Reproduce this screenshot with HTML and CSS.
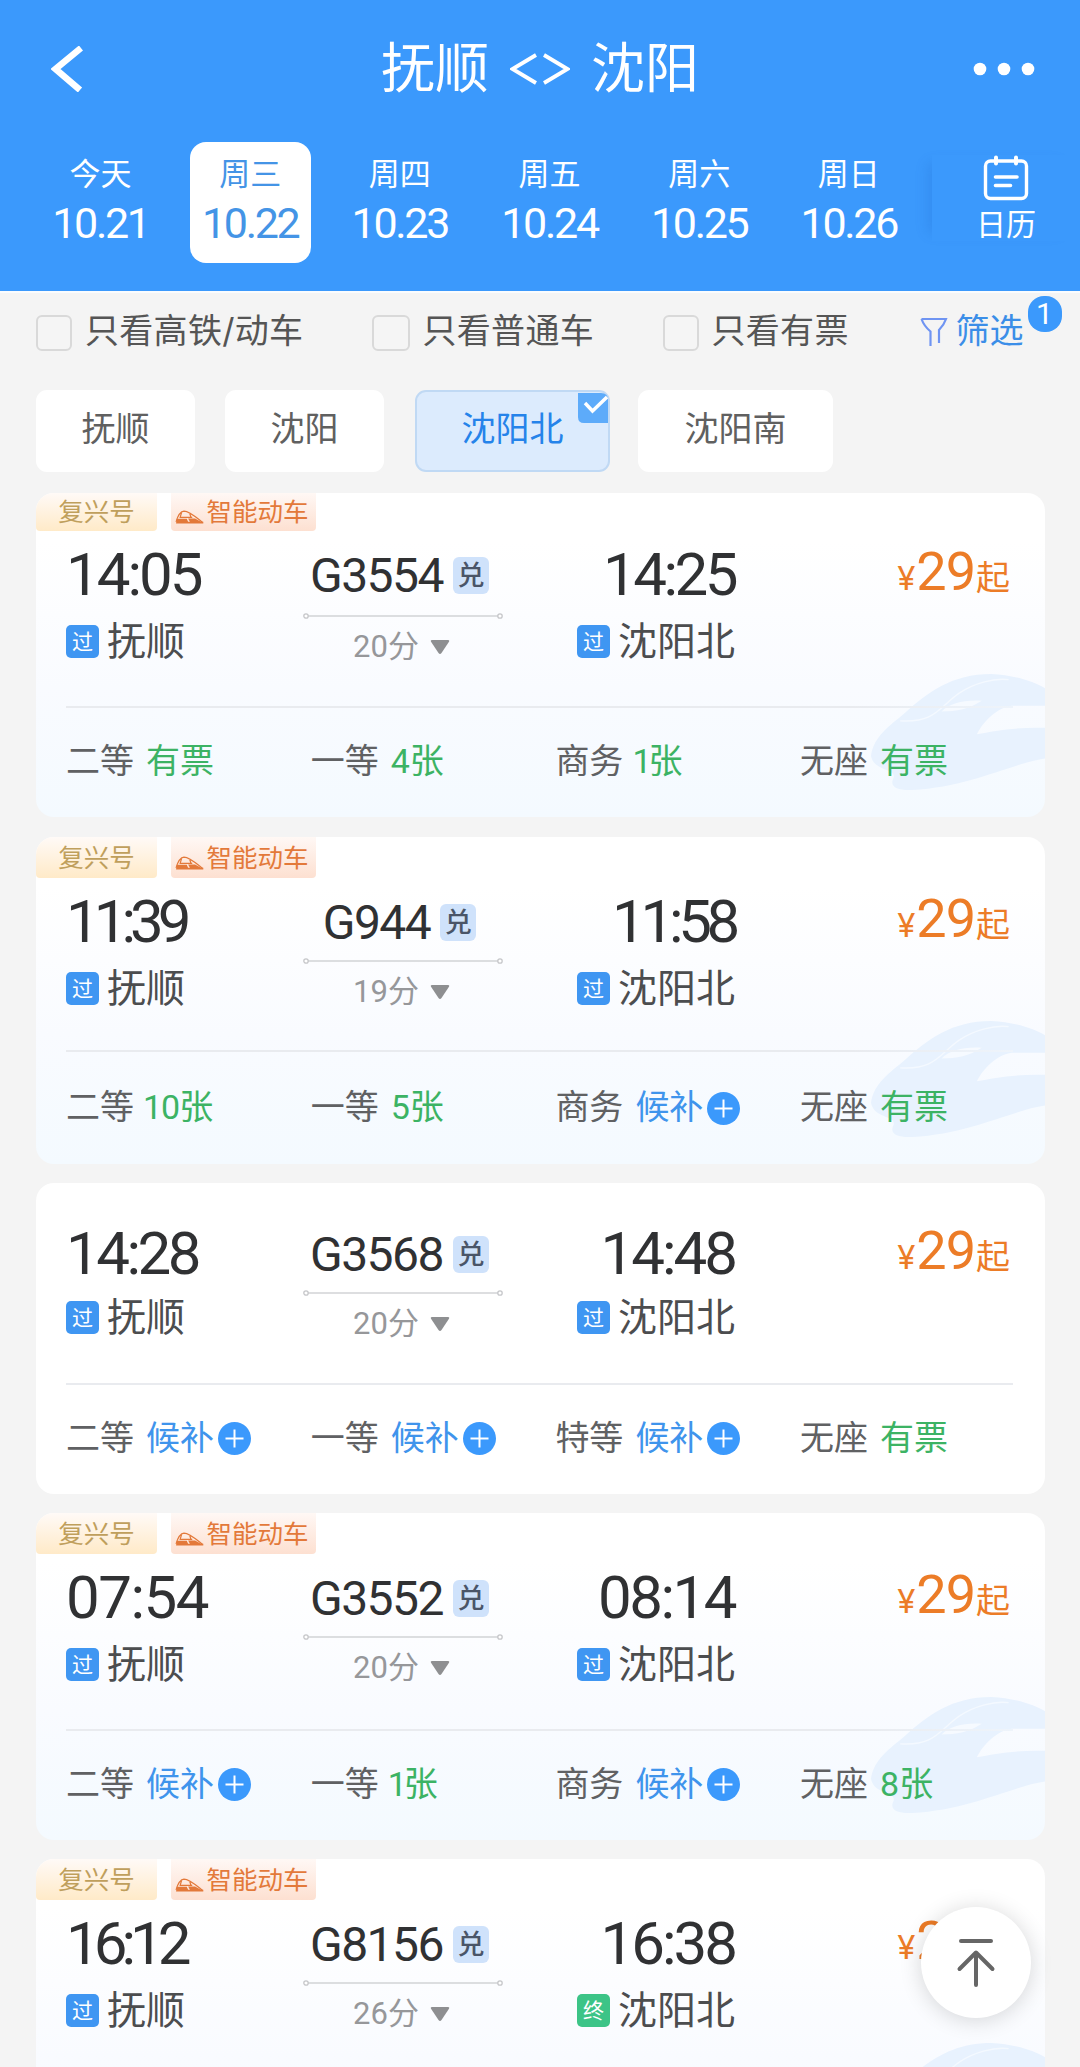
FILE: index.html
```html
<!DOCTYPE html>
<html lang="zh-CN">
<head>
<meta charset="utf-8">
<title>抚顺 - 沈阳</title>
<link rel="stylesheet" href="styles.css">
</head>
<body>
<svg class="defs" width="0" height="0">
  <symbol id="train" viewBox="0 0 84 40"><path d="M3 34 C8 17 14 4 26 3 C42 3 60 20 80 36 M19 7 L15 21 H50 M42 8 L46 20" fill="none" stroke="currentColor" stroke-width="3.500"/><path d="M5 25 H34 L38 34 H82 V39 H3 Z M38 24 H58 L78 35 H44 Z" fill="currentColor"/></symbol>
  <symbol id="plus" viewBox="0 0 33 33"><circle cx="16.500" cy="16.500" r="16.500" fill="#3b99fc"/><path d="M7.500 16.500 H25.500 M16.500 7.500 V25.500" stroke="#fff" stroke-width="2"/></symbol>
  <symbol id="line" viewBox="0 0 200 8"><path d="M5 4 H195" stroke="#d2d3d6" stroke-width="1.500"/><g fill="#fff" stroke="#c6c7ca" stroke-width="1.300"><circle cx="3" cy="4" r="2.200"/><circle cx="197" cy="4" r="2.200"/></g></symbol>
  <symbol id="tri" viewBox="0 0 20 16"><path d="M2 1 H18 Q20 1 18.800 3 L11.500 14 Q10 16 8.500 14 L1.200 3 Q0 1 2 1 Z" fill="#8e8f91"/></symbol>
  <symbol id="bullet-train" viewBox="960 585 506 350" preserveAspectRatio="none"><path fill="#e8f2fe" d="M960 830 C968 770 1015 740 1060 700 C1125 640 1195 585 1310 585 C1370 588 1430 605 1466 628 V680 H1370 C1325 685 1285 730 1268 765 C1320 755 1390 743 1466 746 V838 C1370 852 1250 922 1080 932 C1040 934 1014 924 1024 900 C1040 865 970 880 960 830 Z"/><path fill="none" stroke="#f4f9ff" stroke-width="4" d="M1045 725 C1150 732 1160 680 1220 640 C1260 612 1320 596 1360 602"/><path fill="#f6faff" d="M1165 697 C1190 672 1230 662 1282 665 C1245 690 1210 697 1165 697 Z"/></symbol>
</svg>

<header class="header">
  <div class="navbar">
    <svg class="back" viewBox="0 0 32 46"><path d="M30 2 L4.500 23 L29 44" fill="none" stroke="#fff" stroke-width="6.500" stroke-linejoin="miter"/></svg>
    <h1 class="title">抚顺 <svg class="swap" viewBox="0 0 60 32"><path d="M26 2 L2.500 16 L26 30 M34 2 L57.500 16 L34 30" fill="none" stroke="#fff" stroke-width="3.800"/></svg> 沈阳</h1>
    <svg class="more" viewBox="0 0 62 14"><g fill="#fff"><circle cx="7" cy="7" r="6.300"/><circle cx="31" cy="7" r="6.300"/><circle cx="55" cy="7" r="6.300"/></g></svg>
  </div>
  <nav class="dates">
    <div class="date"><span>今天</span><b>10.21</b></div>
    <div class="date date--active"><span>周三</span><b>10.22</b></div>
    <div class="date"><span>周四</span><b>10.23</b></div>
    <div class="date"><span>周五</span><b>10.24</b></div>
    <div class="date"><span>周六</span><b>10.25</b></div>
    <div class="date"><span>周日</span><b>10.26</b></div>
    <div class="calendar">
      <svg viewBox="0 0 46 46"><g fill="none" stroke="#fff" stroke-linecap="round"><rect x="2.500" y="6" width="41" height="37.500" rx="5" stroke-width="3.400"/><path d="M13 2.500 V8.500 M33 2.500 V8.500" stroke-width="4"/><path d="M12.500 22 H34 M12.500 30.500 H27.500" stroke-width="3.600"/></g></svg>
      <span>日历</span>
    </div>
  </nav>
</header>

<main>
  <div class="filters">
    <label class="check"><i></i>只看高铁/动车</label>
    <label class="check"><i></i>只看普通车</label>
    <label class="check"><i></i>只看有票</label>
    <div class="more-filter">
      <svg viewBox="0 0 28 32"><path d="M1.500 2 H26 Q24 8 19 13 V26 M1.500 2 Q4 9 10.500 14.500 V29" fill="none" stroke="#6f94f2" stroke-width="2.200"/></svg>筛选<em>1</em>
    </div>
  </div>

  <div class="chips">
    <div class="chip">抚顺</div>
    <div class="chip">沈阳</div>
    <div class="chip chip--wide chip--active">沈阳北<svg viewBox="0 0 30 30"><path d="M0 0 H23 Q30 0 30 7 V30 H6 Q0 30 0 24 Z" fill="#5dabfa"/><path d="M7 10 L14.500 18 L29 4" fill="none" stroke="#fff" stroke-width="3.400"/></svg></div>
    <div class="chip chip--wide">沈阳南</div>
  </div>

  <section class="card card--smart card--first">
    <svg class="watermark"><use href="#bullet-train"/></svg>
    <div class="tags"><span class="tag">复兴号</span><span class="tag tag--smart"><svg><use href="#train"/></svg>智能动车</span></div>
    <div class="trip">
      <div class="stop"><div class="time t1">14:05</div><div class="station"><i>过</i>抚顺</div></div>
      <div class="route"><div class="number">G3554<i>兑</i></div><svg class="line"><use href="#line"/></svg><div class="duration">20分<svg><use href="#tri"/></svg></div></div>
      <div class="stop stop--end"><div class="time t3">14:25</div><div class="station"><i>过</i>沈阳北</div></div>
      <div class="price"><small>¥</small><b>29</b><span>起</span></div>
    </div>
    <div class="seats">
      <div class="seat">二等<span>有票</span></div><div class="seat">一等<span>4张</span></div><div class="seat">商务<span class="one">1张</span></div><div class="seat">无座<span>有票</span></div>
    </div>
  </section>

  <section class="card card--smart card--second">
    <svg class="watermark"><use href="#bullet-train"/></svg>
    <div class="tags"><span class="tag">复兴号</span><span class="tag tag--smart"><svg><use href="#train"/></svg>智能动车</span></div>
    <div class="trip">
      <div class="stop"><div class="time t4">11:39</div><div class="station"><i>过</i>抚顺</div></div>
      <div class="route"><div class="number">G944<i>兑</i></div><svg class="line"><use href="#line"/></svg><div class="duration">19分<svg><use href="#tri"/></svg></div></div>
      <div class="stop stop--end"><div class="time t2">11:58</div><div class="station"><i>过</i>沈阳北</div></div>
      <div class="price"><small>¥</small><b>29</b><span>起</span></div>
    </div>
    <div class="seats">
      <div class="seat">二等<span class="ten">10张</span></div><div class="seat">一等<span>5张</span></div><div class="seat seat--wait">商务<span>候补</span><svg><use href="#plus"/></svg></div><div class="seat">无座<span>有票</span></div>
    </div>
  </section>

  <section class="card card--plain">
    <div class="trip">
      <div class="stop"><div class="time t3">14:28</div><div class="station"><i>过</i>抚顺</div></div>
      <div class="route"><div class="number">G3568<i>兑</i></div><svg class="line"><use href="#line"/></svg><div class="duration">20分<svg><use href="#tri"/></svg></div></div>
      <div class="stop stop--end"><div class="time t1">14:48</div><div class="station"><i>过</i>沈阳北</div></div>
      <div class="price"><small>¥</small><b>29</b><span>起</span></div>
    </div>
    <div class="seats">
      <div class="seat seat--wait">二等<span>候补</span><svg><use href="#plus"/></svg></div><div class="seat seat--wait">一等<span>候补</span><svg><use href="#plus"/></svg></div><div class="seat seat--wait">特等<span>候补</span><svg><use href="#plus"/></svg></div><div class="seat">无座<span>有票</span></div>
    </div>
  </section>

  <section class="card card--smart">
    <svg class="watermark"><use href="#bullet-train"/></svg>
    <div class="tags"><span class="tag">复兴号</span><span class="tag tag--smart"><svg><use href="#train"/></svg>智能动车</span></div>
    <div class="trip">
      <div class="stop"><div class="time">07:54</div><div class="station"><i>过</i>抚顺</div></div>
      <div class="route"><div class="number">G3552<i>兑</i></div><svg class="line"><use href="#line"/></svg><div class="duration">20分<svg><use href="#tri"/></svg></div></div>
      <div class="stop stop--end"><div class="time t0">08:14</div><div class="station"><i>过</i>沈阳北</div></div>
      <div class="price"><small>¥</small><b>29</b><span>起</span></div>
    </div>
    <div class="seats">
      <div class="seat seat--wait">二等<span>候补</span><svg><use href="#plus"/></svg></div><div class="seat">一等<span class="one">1张</span></div><div class="seat seat--wait">商务<span>候补</span><svg><use href="#plus"/></svg></div><div class="seat">无座<span>8张</span></div>
    </div>
  </section>

  <section class="card card--smart">
    <svg class="watermark"><use href="#bullet-train"/></svg>
    <div class="tags"><span class="tag">复兴号</span><span class="tag tag--smart"><svg><use href="#train"/></svg>智能动车</span></div>
    <div class="trip">
      <div class="stop"><div class="time t4">16:12</div><div class="station"><i>过</i>抚顺</div></div>
      <div class="route"><div class="number">G8156<i>兑</i></div><svg class="line"><use href="#line"/></svg><div class="duration">26分<svg><use href="#tri"/></svg></div></div>
      <div class="stop stop--end"><div class="time t1">16:38</div><div class="station"><i class="final">终</i>沈阳北</div></div>
      <div class="price"><small>¥</small><b>29</b><span>起</span></div>
    </div>
    <div class="seats"></div>
  </section>
</main>

<div class="to-top"><svg viewBox="0 0 40 50"><g fill="none" stroke="#666" stroke-width="4" stroke-linecap="round"><path d="M5 3 H35"/><path d="M20 15 V47 M3.500 31 L20 14.500 L36.500 31" stroke-linejoin="round"/></g></svg></div>
</body>
</html>
```
FILE: styles.css
```css
* { box-sizing: border-box; }
body {
  position: relative;
  margin: 0;
  width: 1080px;
  height: 2067px;
  background: #f4f4f4;
  font-family: Inter, "Noto Sans CJK SC", sans-serif;
  color: #555;
}
main { height: 1776px; overflow: hidden; }
i, em { font-style: normal; }
b { font-weight: 400; }
svg { display: block; flex: none; }
.defs { position: absolute; }

.header { position: relative; height: 291px; background: #3b99fc; color: #fff; box-shadow: 0 2px 0 #fafcfe; }
.navbar {
  display: grid;
  grid-template-columns: 120px 1fr 120px;
  align-items: center;
  height: 137px;
  padding-left: 51px;
  padding-right: 45px;
}
.back { width: 32px; height: 46px; }
.title {
  display: flex;
  justify-content: center;
  align-items: center;
  gap: 21px;
  margin: 1px 0 0 -6px;
  font-size: 54px;
  line-height: 80px;
  font-weight: 400;
}
.swap { width: 60px; height: 32px; }
.more { width: 62px; height: 14px; justify-self: end; }

.dates { display: flex; padding: 5px 0 0 40px; }
.date {
  display: flex;
  flex-direction: column;
  align-items: center;
  width: 121px;
  height: 121px;
  margin-right: 28.700px;
  padding-top: 11px;
  border-radius: 16px;
  font-size: 31px;
  line-height: 42px;
}
.date b {
  font-family: Roboto, sans-serif;
  font-size: 43px;
  line-height: 54px;
  letter-spacing: -2.300px;
  margin-top: 1px;
}
.date--active { background: #fff; color: #4494e6; }
.calendar {
  display: flex;
  flex-direction: column;
  align-items: center;
  align-self: flex-start;
  width: 148px;
  height: 86px;
  margin: 13px 0 0 -6px;
  font-size: 30px;
  line-height: 40px;
  box-shadow: -12px 0 12px -8px rgba(20, 90, 190, .18);
}
.calendar svg { width: 46px; height: 46px; }
.calendar span { margin-top: 3px; }

.filters { display: flex; align-items: center; height: 99px; padding-left: 36px; font-size: 34px; line-height: 50px; }
.check { display: flex; align-items: center; padding-bottom: 20px; white-space: nowrap; letter-spacing: .3px; }
.check:nth-child(1) { width: 335.500px; }
.check:nth-child(2) { width: 291px; }
.check:nth-child(3) { width: 257px; }
.check i { width: 36px; height: 36px; margin: 5px 13px 0 0; border: 2px solid #d9d9d9; border-radius: 6px; background: #f5f5f5; }
.check:nth-child(2) i { width: 38px; }
.more-filter { display: flex; align-items: center; padding-bottom: 20px; color: #3b8ee8; }
.more-filter svg { width: 28px; height: 32px; margin: 4px 8px 0 0; }
.more-filter em {
  width: 34px;
  height: 36px;
  margin: -34px 0 0 4px;
  border-radius: 16px;
  background: #3b99fc;
  color: #fff;
  font: 30px/35px Roboto, sans-serif;
  text-align: center;
}

.chips { display: flex; gap: 30px; padding-left: 36px; }
.chip {
  position: relative;
  width: 159px;
  height: 82px;
  border-radius: 11px;
  background: #fff;
  font-size: 34px;
  line-height: 78px;
  text-align: center;
  color: #606060;
}
.chip:nth-child(3) { margin-left: 1px; margin-right: -2px; }
.chip--wide { width: 195px; }
.chip--active { border: 2px solid #c0d9f4; background: #dcebfd; color: #2583ea; line-height: 74px; }
.chip--active svg { position: absolute; top: 1px; right: 0; width: 30px; height: 30px; }

.card {
  --gap: 12px;
  --trip: 175px;
  --seats: 111px;
  position: relative;
  width: 1009px;
  margin: 19px 0 0 36px;
  border-radius: 18px;
  background: #fff;
  overflow: hidden;
}
.card--smart { background: linear-gradient(#fff 15%, #f9fbff 60%, #f4faff); }
.card--first { margin-top: 21px; }
.card--second { --trip: 172px; --seats: 114px; margin-top: 20px; }
.card--plain { --gap: 9px; --trip: 200px; }
.watermark { position: absolute; right: 0; bottom: 26px; width: 174px; height: 117px; }

.tags { display: flex; gap: 14px; height: 41px; }
.card--first .tags { height: 38px; }
.tag {
  display: flex;
  justify-content: center;
  align-items: center;
  width: 121px;
  border-radius: 0 0 4px 4px;
  background: linear-gradient(#fffaf7, #ffeac8);
  color: #bf9f5c;
  font-size: 25.500px;
  line-height: 36px;
}
.tag--smart { width: 145px; background: linear-gradient(#fff8f5, #fde0d1); color: #e3793a; }
.tag--smart svg { width: 29px; height: 14px; margin: 10px 2px 0 -3px; }

.trip { position: relative; display: flex; height: var(--trip); padding: 14px 35px 0 30px; }
.card--plain .trip { padding-top: 41px; }
.stop { width: 237px; }
.stop--end { display: flex; flex-direction: column; align-items: flex-end; width: 194px; margin-left: 38px; }
.time { font: 60px/60px Roboto, sans-serif; letter-spacing: -1.500px; color: #303133; }
.time.t0 { letter-spacing: -2.500px; }
.time.t1 { letter-spacing: -3px; }
.time.t2 { letter-spacing: -5.300px; }
.time.t3 { letter-spacing: -3.500px; }
.time.t4 { letter-spacing: -6px; }
.station { display: flex; align-items: center; margin-top: var(--gap); font-size: 39px; line-height: 48px; color: #4c4d4f; white-space: nowrap; }
.station i { width: 33px; height: 33px; margin-right: 8px; border-radius: 5px; background: #3f96f2; color: #fff; font-size: 21px; line-height: 33px; text-align: center; }
.station .final { background: #3cc487; }

.route { display: flex; flex-direction: column; align-items: center; width: 200px; }
.number { display: flex; justify-content: center; align-items: center; margin-right: 7px; padding-top: 1px; font: 48px/59px Roboto, sans-serif; letter-spacing: -1.500px; color: #303133; }
.number i {
  width: 36px;
  height: 37px;
  margin-left: 10px;
  border-radius: 6px;
  background: #cfe2fb;
  font: 500 27px/37px Inter, "Noto Sans CJK SC", sans-serif;
  letter-spacing: 0;
  text-align: center;
  color: #4a5568;
}
.line { width: 200px; height: 8px; margin-top: 5px; }
.duration { display: flex; align-items: center; margin: 7px 3px 0 0; font: 31px/40px Roboto, "Noto Sans CJK SC", sans-serif; color: #96979a; }
.duration svg { width: 20px; height: 16px; margin-left: 11px; }
.card--first .line { margin-top: 7px; }

.price { display: flex; align-items: baseline; margin: -3px 0 0 auto; height: 60px; color: #ec7c27; line-height: 60px; }
.price small { font-family: Inter, sans-serif; font-size: 33px; margin-right: 1px; }
.price b { font-family: Roboto, sans-serif; font-size: 54px; letter-spacing: -1px; }
.price span { font-size: 34px; margin-left: 1px; }

.seats { position: relative; display: flex; height: var(--seats); margin: 0 0 0 30px; padding-bottom: 2px; }
.seats::before { content: ""; position: absolute; top: 0; left: 0; width: 947px; height: 2px; background: #e9ebef; }
.card--smart .seats::before { background: linear-gradient(90deg, #e9ebef 83%, #eef4fb); }
.card--second .seats { padding-bottom: 0; }
.seat { display: flex; align-items: center; width: 244.700px; font: 34px/50px Roboto, "Noto Sans CJK SC", sans-serif; color: #606163; }
.seat span { margin-left: 12px; color: #3cb364; }
.seat .one { margin-left: 9px; letter-spacing: -3px; }
.seat .ten { margin-left: 9px; letter-spacing: -1px; }
.seat--wait span { color: #3f94ec; }
.seat svg { width: 33px; height: 33px; margin: 2px 0 0 4px; }

.to-top {
  position: absolute;
  left: 921px;
  top: 1907px;
  display: flex;
  justify-content: center;
  align-items: center;
  width: 110px;
  height: 111px;
  border-radius: 50%;
  background: #fff;
  box-shadow: 0 2px 22px rgba(0, 0, 0, .16);
}
.to-top svg { width: 40px; height: 50px; }
```
